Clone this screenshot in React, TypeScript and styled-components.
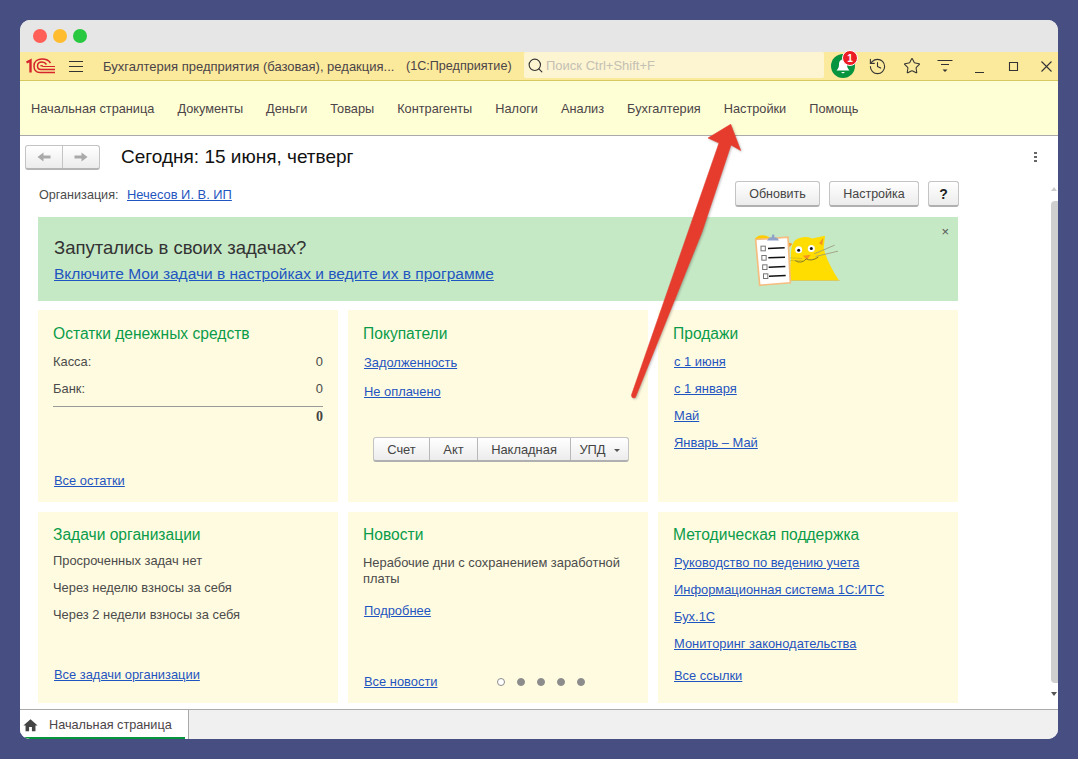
import React from "react";
import styled, { createGlobalStyle } from "styled-components";
import { History, Search, Star } from "lucide-react";
import { MdHome } from "react-icons/md";

const menuItems = [
  "Начальная страница",
  "Документы",
  "Деньги",
  "Товары",
  "Контрагенты",
  "Налоги",
  "Анализ",
  "Бухгалтерия",
  "Настройки",
  "Помощь",
];

const App: React.FC = () => {
  return (
    <>
      <GlobalStyle />
      <Window>
        <TitleBar>
          <Light color="#ff5f57" />
          <Light color="#febc2e" />
          <Light color="#28c840" />
        </TitleBar>

        <AppBar>
          <Logo />
          <Burger>
            <i />
            <i />
            <i />
          </Burger>
          <AppTitle>Бухгалтерия предприятия (базовая), редакция...</AppTitle>
          <AppKind>(1С:Предприятие)</AppKind>
          <SearchBox>
            <Search size={17} color="#333" strokeWidth={1.6} />
            <span>Поиск Ctrl+Shift+F</span>
          </SearchBox>
          <Bell>
            <BellIcon />
            <Badge>1</Badge>
          </Bell>
          <Tools>
            <ToolIcon>
              <History size={19} strokeWidth={1.4} color="#333" />
            </ToolIcon>
            <ToolIcon>
              <Star size={18} strokeWidth={1.4} color="#333" />
            </ToolIcon>
            <ToolIcon>
              <FilterIcon />
            </ToolIcon>
            <ToolIcon>
              <WindowIcon d="M4 14.5h9" />
            </ToolIcon>
            <ToolIcon>
              <WindowIcon d="M4.5 4.5h8v8h-8z" />
            </ToolIcon>
            <ToolIcon>
              <WindowIcon d="M3.5 3.5l10 10M13.5 3.5l-10 10" />
            </ToolIcon>
          </Tools>
        </AppBar>

        <MenuBar>
          {menuItems.map((item) => (
            <MenuItem key={item}>{item}</MenuItem>
          ))}
        </MenuBar>

        <Body>
          <Main>
            <PageHead>
              <NavGroup>
                <NavButton>
                  <NavArrow />
                </NavButton>
                <NavButton>
                  <NavArrow flip />
                </NavButton>
              </NavGroup>
              <PageTitle>Сегодня: 15 июня, четверг</PageTitle>
              <MoreDots>
                <i />
                <i />
                <i />
              </MoreDots>
            </PageHead>

            <OrgRow>
              <OrgLabel>Организация:</OrgLabel>
              <Link>Нечесов И. В. ИП</Link>
              <OrgActions>
                <Button width={85}>Обновить</Button>
                <Button width={90}>Настройка</Button>
                <Button width={31}>
                  <strong>?</strong>
                </Button>
              </OrgActions>
            </OrgRow>

            <Banner>
              <BannerText>
                <BannerTitle>Запутались в своих задачах?</BannerTitle>
                <BannerLink>
                  Включите Мои задачи в настройках и ведите их в программе
                </BannerLink>
              </BannerText>
              <CatPicture />
              <BannerClose>×</BannerClose>
            </Banner>

            <Cards>
              <Card>
                <CardTitle>Остатки денежных средств</CardTitle>
                <ValueRow>
                  <span>Касса:</span>
                  <span>0</span>
                </ValueRow>
                <ValueRow>
                  <span>Банк:</span>
                  <span>0</span>
                </ValueRow>
                <TotalRow>0</TotalRow>
                <CardFooter lift={1}>
                  <Link>Все остатки</Link>
                </CardFooter>
              </Card>

              <Card>
                <CardTitle>Покупатели</CardTitle>
                <LinkRow>
                  <Link>Задолженность</Link>
                </LinkRow>
                <LinkRow gap={2}>
                  <Link>Не оплачено</Link>
                </LinkRow>
                <Segments>
                  <Segment width={55}>Счет</Segment>
                  <Segment width={48}>Акт</Segment>
                  <Segment width={93}>Накладная</Segment>
                  <Segment width={58}>
                    УПД <Caret />
                  </Segment>
                </Segments>
              </Card>

              <Card>
                <CardTitle>Продажи</CardTitle>
                <LinkRow gap={-1}>
                  <Link>с 1 июня</Link>
                </LinkRow>
                <LinkRow>
                  <Link>с 1 января</Link>
                </LinkRow>
                <LinkRow>
                  <Link>Май</Link>
                </LinkRow>
                <LinkRow>
                  <Link>Январь – Май</Link>
                </LinkRow>
              </Card>

              <Card lower>
                <CardTitle>Задачи организации</CardTitle>
                <TextRow>Просроченных задач нет</TextRow>
                <TextRow>Через неделю взносы за себя</TextRow>
                <TextRow>Через 2 недели взносы за себя</TextRow>
                <CardFooter lift={8}>
                  <Link>Все задачи организации</Link>
                </CardFooter>
              </Card>

              <Card lower>
                <CardTitle>Новости</CardTitle>
                <NewsText>
                  Нерабочие дни с сохранением заработной платы
                </NewsText>
                <LinkRow>
                  <Link>Подробнее</Link>
                </LinkRow>
                <NewsFooter>
                  <Link>Все новости</Link>
                  <Dots>
                    <Dot active />
                    <Dot />
                    <Dot />
                    <Dot />
                    <Dot />
                  </Dots>
                </NewsFooter>
              </Card>

              <Card lower>
                <CardTitle>Методическая поддержка</CardTitle>
                <LinkRow gap={2}>
                  <Link>Руководство по ведению учета</Link>
                </LinkRow>
                <LinkRow>
                  <Link>Информационная система 1С:ИТС</Link>
                </LinkRow>
                <LinkRow>
                  <Link>Бух.1С</Link>
                </LinkRow>
                <LinkRow>
                  <Link>Мониторинг законодательства</Link>
                </LinkRow>
                <CardFooter lift={7}>
                  <Link>Все ссылки</Link>
                </CardFooter>
              </Card>
            </Cards>
          </Main>

          <ScrollTrack>
            <ScrollArrow />
            <ScrollThumb />
            <ScrollArrow down />
          </ScrollTrack>
        </Body>

        <TabBar>
          <Tab>
            <MdHome size={17} color="#444" />
            <span>Начальная страница</span>
          </Tab>
        </TabBar>
      </Window>
      <RedArrow />
    </>
  );
};

export default App;

// Красная стрелка поверх окна
const RedArrow = () => (
  <ArrowSvg width="1078" height="759" viewBox="0 0 1078 759">
    <path
      d="M631.5 395Q631.5 398 634 398Q635.5 398 636 396L702 232L731 145L740.7 150.5L730.7 124.3L708 138L719 143z"
      fill="#e53c2e"
      stroke="#e53c2e"
      strokeWidth="0.6"
      strokeLinejoin="round"
    />
  </ArrowSvg>
);

const ArrowSvg = styled.svg`
  position: absolute;
  left: 0;
  top: 0;
  pointer-events: none;
  filter: drop-shadow(1px 1px 1px rgba(0, 0, 0, 0.25));
`;

const Logo = () => (
  <svg width="30" height="16" viewBox="0 0 30 16">
    <g fill="none" stroke="#d5242b" strokeWidth="1.5">
      <path d="M0.5 4.5L4.5 2.5V14.5" strokeWidth="2.4" />
      <path d="M8 8C8 3 12 1 16 1C20 1 23 2.5 24.5 5" />
      <path d="M8 8C8 12.5 10.5 14.5 14 14.5H29" />
      <path d="M11.5 8C11.5 5.5 13.5 4 16 4C18 4 19.5 5 20.5 6.5" />
      <path d="M11.5 8C11.5 10 13 11.5 15 11.5H29" />
      <path d="M14.5 8.3C15 7.5 16 7 17 8.5H29" strokeWidth="1.2" />
    </g>
  </svg>
);

const BellIcon = () => (
  <svg width="24" height="24" viewBox="0 0 24 24">
    <path
      d="M12 5.5c-3 0-4 2.5-4 5 0 3-1 4.5-2.5 6h13c-1.5-1.5-2.5-3-2.5-6 0-2.5-1-5-4-5z"
      fill="#fff"
    />
    <path d="M10 18h4l-2 1.6z" fill="#fff" />
  </svg>
);

const FilterIcon = () => (
  <svg width="18" height="18" viewBox="0 0 18 18">
    <path d="M1.5 3.5h15M5 7.5h8" stroke="#333" strokeWidth="1.1" fill="none" />
    <path d="M6.5 12.5h5L9 15z" fill="#333" />
  </svg>
);

const WindowIcon = ({ d }: { d: string }) => (
  <svg width="17" height="17" viewBox="0 0 17 17">
    <path d={d} stroke="#333" strokeWidth="1.1" fill="none" />
  </svg>
);

const NavArrow = ({ flip }: { flip?: boolean }) => (
  <svg
    width="14"
    height="12"
    viewBox="0 0 14 12"
    style={flip ? { transform: "scaleX(-1)" } : undefined}
  >
    <path d="M0.5 6L6.5 1.5V4.5H13.5V7.5H6.5V10.5z" fill="#a9a9a9" />
  </svg>
);

// Кот с планшетом на баннере
const CatPicture = () => (
  <CatSvg width="90" height="57" viewBox="100 70 270 170">
    <path
      d="M208 218L214 150Q212 110 228 96Q250 82 278 92L316 84L312 120Q320 160 358 218z"
      fill="#ffdd00"
    />
    <path d="M298 106L311 90L308 112z" fill="#f7941d" />
    <path d="M206 104L218 108L210 118z" fill="#f7941d" />
    <path d="M208 218H360" stroke="#d8bd5a" strokeWidth="2" />
    <circle cx="237" cy="126" r="10.5" fill="#fff" />
    <circle cx="275" cy="122" r="10.5" fill="#fff" />
    <circle cx="237" cy="127" r="4.5" fill="#111" />
    <circle cx="275" cy="122" r="4.5" fill="#111" />
    <path d="M249 144L273 141L262 156z" fill="#f7941d" />
    <path
      d="M226 158Q244 170 260 153Q274 162 296 148"
      stroke="#444"
      strokeWidth="2"
      fill="none"
    />
    <path
      d="M284 138L345 112M288 146L355 130"
      stroke="#9a9a7a"
      strokeWidth="2.5"
      fill="none"
    />
    <path
      d="M210 150L248 152M212 158L248 158"
      stroke="#b8a030"
      strokeWidth="1.5"
      fill="none"
    />
    <path d="M106 92Q122 74 150 88L140 118L112 116z" fill="#ffcc00" />
    <path d="M108 95L205 88L212 225L120 232z" fill="#fff" stroke="#f5bd80" strokeWidth="5" />
    <path d="M142 98Q146 88 156 88L158 80H164V88Q174 88 178 98z" fill="#8fa3c8" />
    {[122, 150, 178, 205].map((y, i) => (
      <g key={y}>
        <rect
          x={124 + i * 2.5}
          y={y - 7}
          width="13"
          height="14"
          fill="#fff"
          stroke="#777"
          strokeWidth="3"
        />
        <path
          d={`M${145 + i} ${y}L${195 + i} ${y - 2}`}
          stroke="#111"
          strokeWidth="4.5"
        />
      </g>
    ))}
  </CatSvg>
);

const GlobalStyle = createGlobalStyle`
  html, body {
    margin: 0;
    padding: 0;
    background: #474f82;
    font-family: "Liberation Sans", Arial, sans-serif;
    font-size: 13px;
    color: #444;
  }
`;

const Window = styled.div`
  width: 1038px;
  height: 719px;
  margin: 20px;
  display: flex;
  flex-direction: column;
  border-radius: 10px;
  overflow: hidden;
  background: #fff;
`;

const TitleBar = styled.div`
  height: 32px;
  flex: none;
  background: #e6e6e6;
  display: flex;
  align-items: center;
  gap: 6px;
  padding: 0 0 0 13px;
  box-sizing: border-box;
`;

const Light = styled.span<{ color: string }>`
  width: 14px;
  height: 14px;
  border-radius: 50%;
  background: ${(props) => props.color};
`;

const AppBar = styled.div`
  height: 29px;
  flex: none;
  box-sizing: border-box;
  background: #fbe99c;
  border-bottom: 1px solid #d8c860;
  display: flex;
  align-items: center;
  padding-left: 6px;

  & > * {
    flex: none;
  }
`;

const Burger = styled.div`
  width: 14px;
  margin-left: 13px;
  display: flex;
  flex-direction: column;
  gap: 4px;

  i {
    display: block;
    height: 1px;
    background: #333;
  }
`;

const AppTitle = styled.span`
  margin-left: 20px;
  width: 303px;
  white-space: nowrap;
  color: #4b4448;
  font-size: 13px;
`;

const AppKind = styled.span`
  width: 118px;
  white-space: nowrap;
  color: #4b4448;
  font-size: 12.6px;
`;

const SearchBox = styled.div`
  width: 300px;
  height: 26px;
  align-self: flex-start;
  background: #fdf5d2;
  border-radius: 2px;
  display: flex;
  align-items: center;
  gap: 2px;
  padding-left: 3px;
  box-sizing: border-box;
  color: #c4c0b2;
  font-size: 13px;
`;

const Bell = styled.div`
  position: relative;
  width: 24px;
  height: 24px;
  margin-left: 7px;
  border-radius: 50%;
  background: #07943f;
`;

const Badge = styled.span`
  position: absolute;
  right: -3px;
  top: -4px;
  width: 14px;
  height: 14px;
  border-radius: 50%;
  background: #ec1c24;
  border: 1px solid #fff;
  color: #fff;
  font-size: 10px;
  font-weight: bold;
  display: flex;
  align-items: center;
  justify-content: center;
`;

const Tools = styled.div`
  margin-left: 6px;
  display: flex;
  align-items: center;
`;

const ToolIcon = styled.span`
  width: 33.8px;
  flex: none;
  display: flex;
  align-items: center;
  justify-content: center;
`;

const MenuBar = styled.div`
  height: 55px;
  flex: none;
  box-sizing: border-box;
  background: #ffffd5;
  border-bottom: 1px solid #aaa;
  display: flex;
  align-items: center;
  gap: 23px;
  padding: 1px 0 0 11px;
`;

const MenuItem = styled.span`
  color: #4b4448;
  font-size: 12.76px;
  white-space: nowrap;
`;

const Body = styled.div`
  flex: 1;
  display: flex;
  min-height: 0;
`;

const Main = styled.div`
  flex: 1;
  min-width: 0;
  padding: 8px 0 0 5px;
  display: flex;
  flex-direction: column;
`;

const PageHead = styled.div`
  height: 26px;
  display: flex;
  align-items: center;
`;

const NavGroup = styled.div`
  display: flex;
  width: 75px;
  height: 25px;
  box-sizing: border-box;
  border: 1px solid #c4c4c4;
  border-bottom: 2px solid #b5b5b5;
  border-radius: 3px;
  background: linear-gradient(#fff, #ececec);
`;

const NavButton = styled.div`
  flex: 1;
  display: flex;
  align-items: center;
  justify-content: center;

  & + & {
    border-left: 1px solid #c4c4c4;
  }
`;

const PageTitle = styled.h1`
  margin: 0 0 0 21px;
  font-size: 19px;
  font-weight: normal;
  color: #111;
`;

const MoreDots = styled.div`
  margin-left: auto;
  margin-right: 13px;
  display: flex;
  flex-direction: column;
  gap: 2px;

  i {
    display: block;
    width: 3px;
    height: 2px;
    background: #666;
  }
`;

const OrgRow = styled.div`
  height: 26px;
  margin-top: 11px;
  width: 934px;
  display: flex;
  align-items: center;
`;

const OrgLabel = styled.span`
  margin-left: 14px;
  padding-top: 2px;
  width: 88px;
  font-size: 12.6px;
  color: #4b4b4b;
`;

const Link = styled.a`
  color: #1f55c0;
  font-size: 12.9px;
  text-decoration: underline;
  white-space: nowrap;
`;

const OrgActions = styled.div`
  margin-left: auto;
  display: flex;
  gap: 9px;
`;

const Button = styled.div<{ width: number }>`
  width: ${(props) => props.width}px;
  height: 26px;
  box-sizing: border-box;
  padding-top: 1px;
  border: 1px solid #c4c4c4;
  border-bottom: 2px solid #b0b0b0;
  border-radius: 3px;
  background: linear-gradient(#fff, #ececec);
  display: flex;
  align-items: center;
  justify-content: center;
  font-size: 12.5px;
  color: #444;

  strong {
    color: #222;
    font-size: 14px;
  }
`;

const Banner = styled.div`
  position: relative;
  margin: 10px 0 0 13px;
  width: 920px;
  height: 84px;
  background: #c5e8c5;
  display: flex;
  align-items: center;
  padding: 0 0 0 16px;
  box-sizing: border-box;
`;

const BannerText = styled.div`
  display: flex;
  flex-direction: column;
  gap: 6px;
  width: 699px;
  padding-top: 2px;
`;

const BannerTitle = styled.div`
  font-size: 18.5px;
  color: #333;
`;

const BannerLink = styled(Link)`
  font-size: 15.5px;
`;

const CatSvg = styled.svg`
  flex: none;
`;

const BannerClose = styled.span`
  position: absolute;
  right: 9px;
  top: 7px;
  font-size: 13px;
  color: #555;
`;

const Cards = styled.div`
  margin: 9px 0 0 13px;
  width: 920px;
  display: grid;
  grid-template-columns: repeat(3, 300px);
  grid-template-rows: 192px 191px;
  gap: 10px;
`;

const CardTitle = styled.h2`
  margin: 0 0 12px;
  font-size: 15.6px;
  line-height: 19px;
  font-weight: normal;
  color: #0a9b4a;
`;

// Нижний ряд карточек: заголовок на 1px выше, отступ под ним меньше
const Card = styled.section<{ lower?: boolean }>`
  position: relative;
  background: #fffbe0;
  padding: ${(props) => (props.lower ? 13 : 14)}px 15px 13px 15px;
  box-sizing: border-box;
  display: flex;
  flex-direction: column;

  ${CardTitle} {
    margin-bottom: ${(props) => (props.lower ? 9 : 12)}px;
  }
`;

const ValueRow = styled.div`
  display: flex;
  justify-content: space-between;
  font-size: 12.9px;
  line-height: 15px;
  margin: -1px 0 13px;
  color: #4b4b4b;
`;

const TotalRow = styled.div`
  border-top: 1px solid #999;
  margin-top: -3px;
  padding-top: 2px;
  text-align: right;
  font-family: "Liberation Serif", serif;
  font-weight: bold;
  font-size: 14px;
  line-height: 15px;
  color: #444;
`;

const LinkRow = styled.div<{ gap?: number }>`
  line-height: 15px;
  margin-bottom: 12px;
  margin-left: 1px;
  margin-top: ${(props) => props.gap ?? 0}px;
`;

const TextRow = styled.div`
  font-size: 12.9px;
  line-height: 15px;
  margin-bottom: 12px;
  color: #4b4b4b;
`;

const NewsText = styled.div`
  font-size: 12.9px;
  line-height: 16px;
  margin: 2px 0 16px;
  color: #4b4b4b;
`;

const CardFooter = styled.div<{ lift?: number }>`
  margin-top: auto;
  margin-left: 1px;
  line-height: 15px;
  margin-bottom: ${(props) => props.lift ?? 0}px;
`;

const NewsFooter = styled.div`
  margin-top: auto;
  margin-bottom: 1px;
  margin-left: 1px;
  line-height: 15px;
  display: flex;
  align-items: center;
`;

const Dots = styled.div`
  margin-left: 59px;
  display: flex;
  gap: 12px;
`;

const Dot = styled.span<{ active?: boolean }>`
  width: 8px;
  height: 8px;
  box-sizing: border-box;
  border-radius: 50%;
  background: ${(props) => (props.active ? "#fff" : "#8c8c8c")};
  border: 1px solid #8c8c8c;
`;

const Segments = styled.div`
  margin: 26px 0 0 10px;
  display: flex;
  width: 256px;
  height: 25px;
  box-sizing: border-box;
  border: 1px solid #c4c4c4;
  border-bottom: 2px solid #b0b0b0;
  border-radius: 3px;
  background: linear-gradient(#fff, #ececec);
`;

const Segment = styled.div<{ width: number }>`
  width: ${(props) => props.width}px;
  flex: none;
  box-sizing: border-box;
  display: flex;
  align-items: center;
  justify-content: center;
  gap: 8px;
  font-size: 12.9px;
  color: #444;

  & + & {
    border-left: 1px solid #b8b8b8;
  }
`;

const Caret = styled.i`
  width: 0;
  height: 0;
  margin-top: 2px;
  border-left: 3px solid transparent;
  border-right: 3px solid transparent;
  border-top: 3px solid #555;
`;

const ScrollTrack = styled.div`
  width: 8px;
  flex: none;
  display: flex;
  flex-direction: column;
  align-items: center;
  padding: 51px 0 11px;
  box-sizing: border-box;
`;

const ScrollArrow = styled.i<{ down?: boolean }>`
  width: 0;
  height: 0;
  border-left: 3px solid transparent;
  border-right: 3px solid transparent;
  ${(props) =>
    props.down
      ? "border-top: 4px solid #555; margin-top: 9px;"
      : "border-bottom: 4px solid #ccc; margin-bottom: 10px;"}
`;

const ScrollThumb = styled.div`
  width: 7px;
  height: 482px;
  align-self: flex-end;
  border-radius: 4px 0 0 4px;
  background: #cfcfcf;
`;

const TabBar = styled.div`
  height: 30px;
  flex: none;
  box-sizing: border-box;
  border-top: 1px solid #aaa;
  background: #f0f0f0;
  display: flex;
`;

const Tab = styled.div`
  position: relative;
  width: 169px;
  box-sizing: border-box;
  background: #fff;
  border-right: 1px solid #aaa;
  display: flex;
  align-items: center;
  gap: 10px;
  padding: 1px 0 0 2px;
  font-size: 12.7px;
  color: #4b4448;

  &::after {
    content: "";
    position: absolute;
    left: 5px;
    right: 3px;
    bottom: 0;
    height: 2px;
    background: #07943f;
  }
`;
